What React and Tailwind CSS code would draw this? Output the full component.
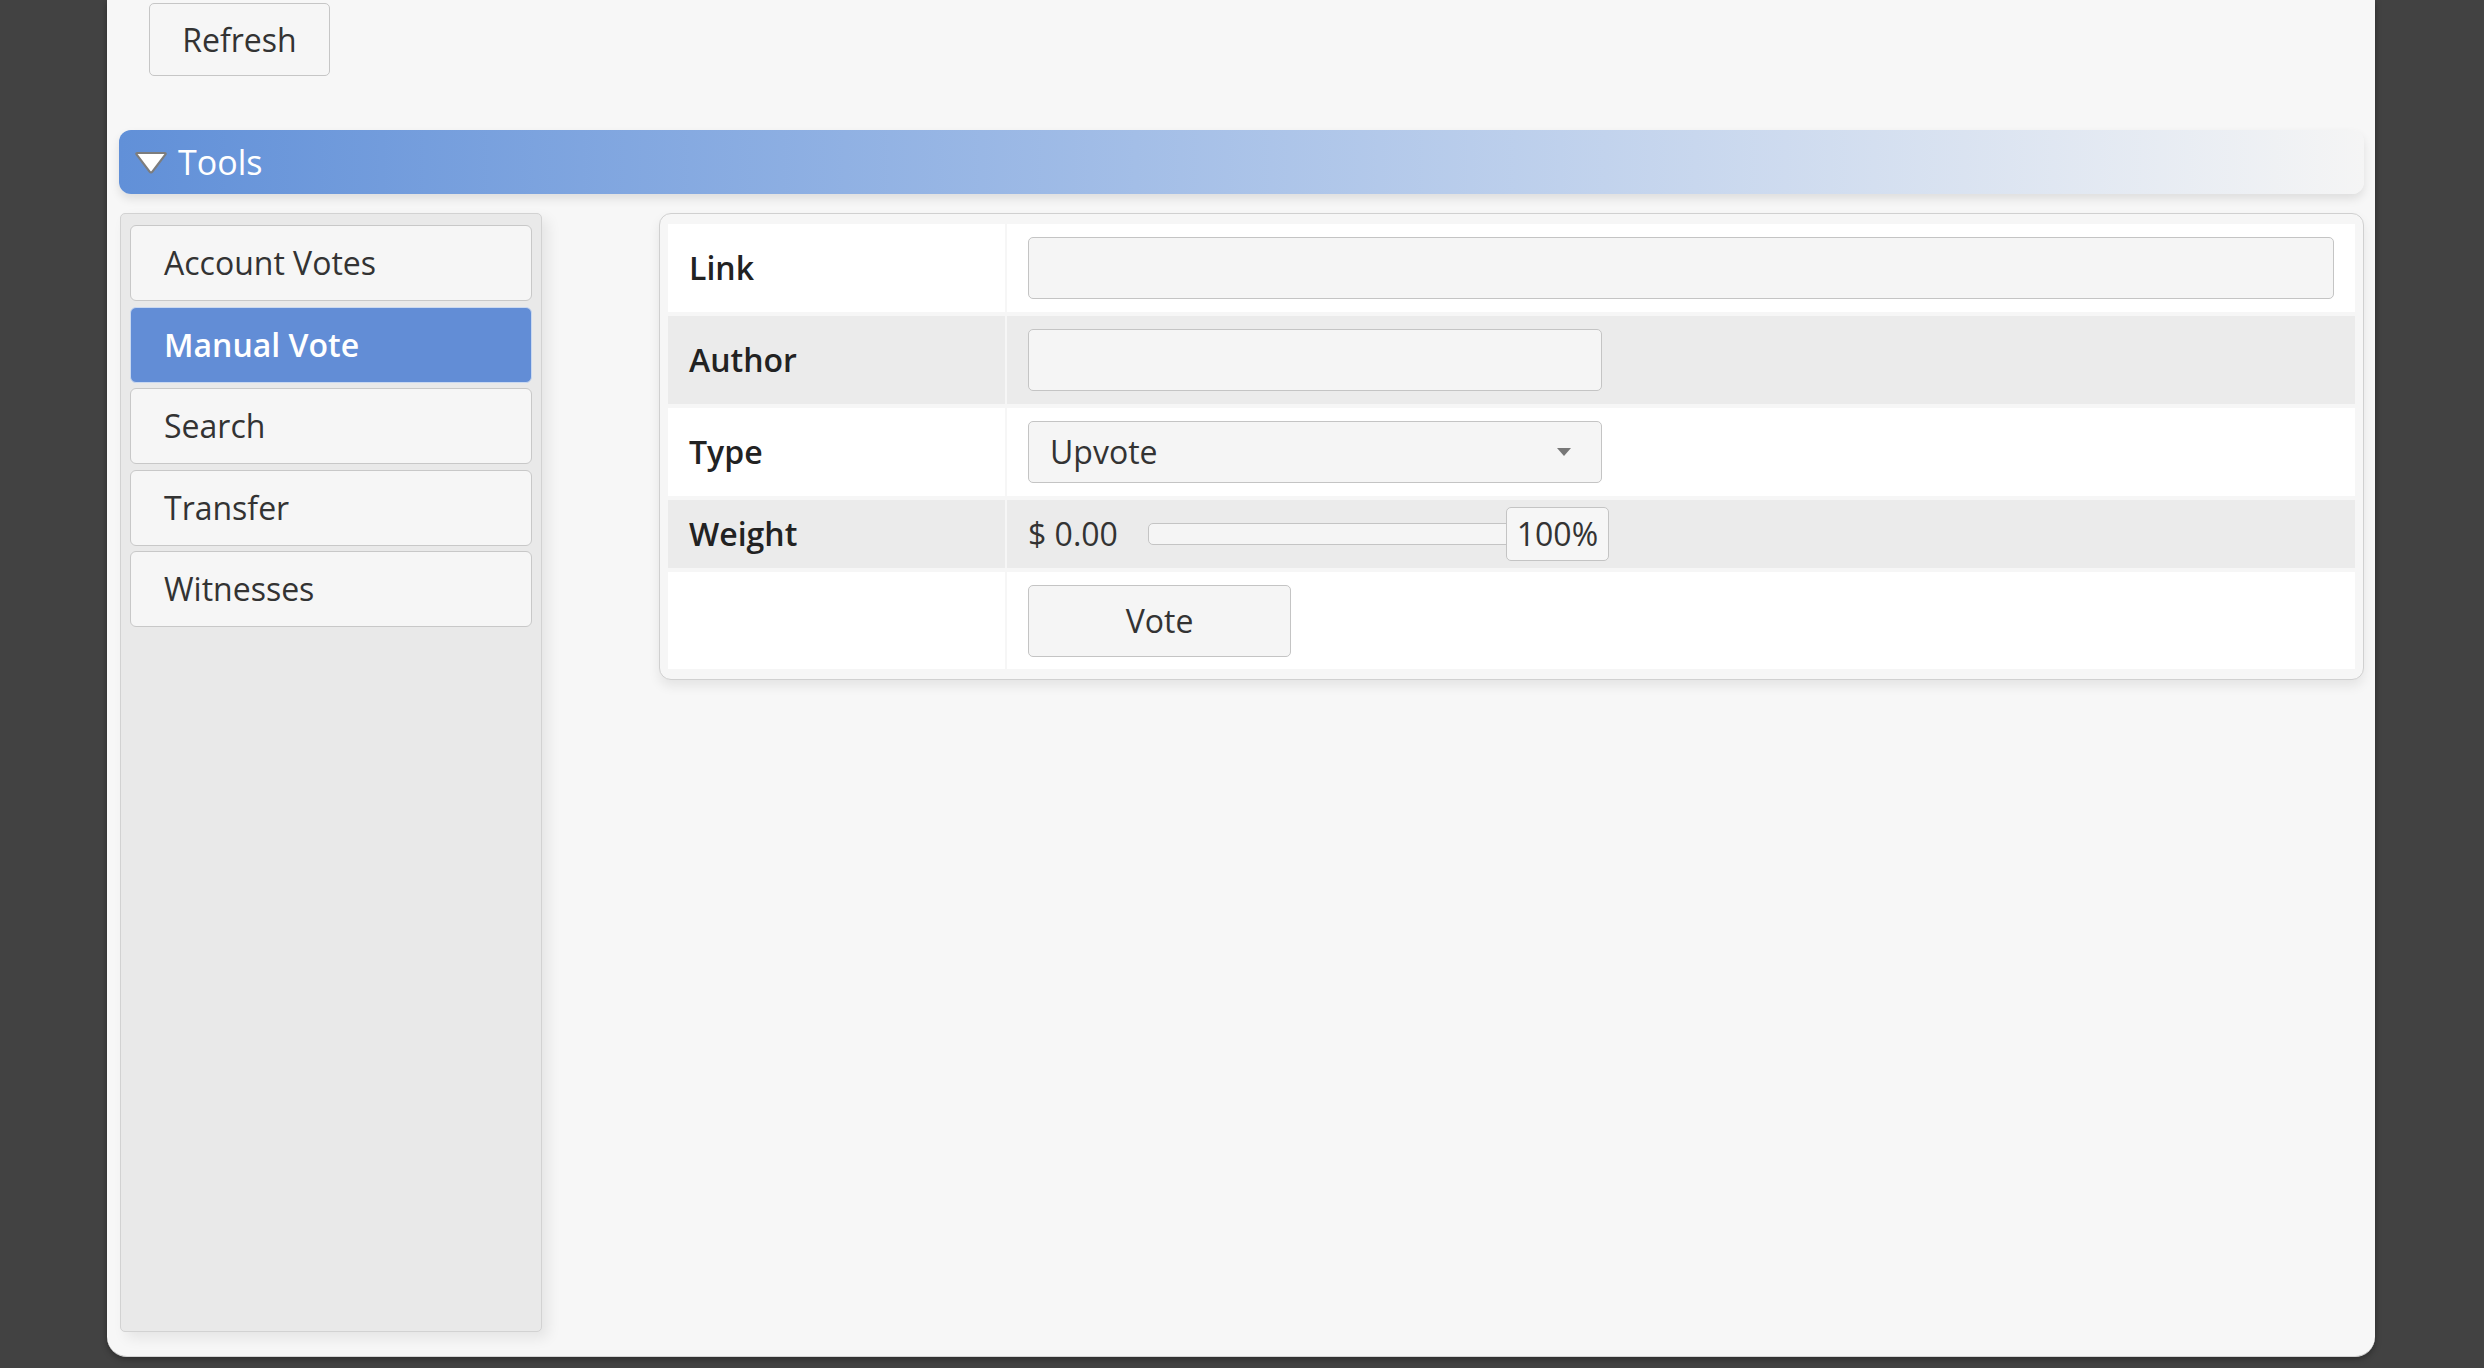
import React from 'react';

const tabs = ['Account Votes', 'Manual Vote', 'Search', 'Transfer', 'Witnesses'];

const TriangleIcon = () => (
  <svg width="34" height="25" viewBox="0 0 34 25" className="shrink-0">
    <path
      d="M3.5 3 L30.5 3 Q32.5 3 31.3 4.6 L18.4 21.6 Q17 23.4 15.6 21.6 L2.7 4.6 Q1.5 3 3.5 3 Z"
      fill="#ffffff"
      stroke="#7d7d7d"
      strokeWidth="2.2"
      strokeLinejoin="round"
    />
  </svg>
);

const Sidebar = ({ active }) => (
  <div className="ml-px h-[1119px] w-[422px] shrink-0 rounded-[5px] border border-[#d2d2d2] bg-[#e9e9e9] px-[9px] pt-[11px] shadow-[6px_6px_14px_rgba(0,0,0,0.08)]">
    <div className="flex flex-col gap-[5.5px]">
      {tabs.map((tab) => (
        <div
          key={tab}
          className={
            tab === active
              ? 'flex h-[76px] items-center rounded-[6px] border border-[#c9d8f0] bg-[#628dd6] pl-[33px] font-semibold text-white'
              : 'flex h-[76px] items-center rounded-[6px] border border-[#c8c8c8] bg-[#f6f6f6] pl-[33px] text-[#333333]'
          }
        >
          {tab}
        </div>
      ))}
    </div>
  </div>
);

const Label = ({ children, shade }) => (
  <div
    className={
      'flex items-center pl-[21px] font-semibold text-[#222222] ' +
      (shade ? 'bg-[#ebebeb]' : 'bg-white')
    }
  >
    {children}
  </div>
);

const Cell = ({ children, shade }) => (
  <div
    className={
      'flex items-center px-[21px] ' + (shade ? 'bg-[#ebebeb]' : 'bg-white')
    }
  >
    {children}
  </div>
);

const inputBox = 'h-[62px] rounded-[5px] border border-[#c4c4c4] bg-[#f5f5f5]';

const ManualVote = () => (
  <div className="ml-[117px] flex-1 self-start rounded-[12px] border border-[#d0d0d0] bg-[#f6f6f6] px-[8px] pt-[10px] pb-[10px] shadow-[0_6px_12px_rgba(0,0,0,0.08)]">
    <div className="grid grid-cols-[337px_1fr] grid-rows-[88px_88px_88px_68px_97px] gap-x-[2px] gap-y-[4px]">
      <Label>Link</Label>
      <Cell>
        <div className={inputBox + ' w-full'} />
      </Cell>

      <Label shade>Author</Label>
      <Cell shade>
        <div className={inputBox + ' w-[574px]'} />
      </Cell>

      <Label>Type</Label>
      <Cell>
        <div className={inputBox + ' flex w-[574px] items-center justify-between pl-[21px] pr-[30px] text-[#333333]'}>
          <span>Upvote</span>
          <svg width="14" height="8" viewBox="0 0 14 8">
            <path d="M0 0 L14 0 L7 8 Z" fill="#777777" />
          </svg>
        </div>
      </Cell>

      <Label shade>Weight</Label>
      <Cell shade>
        <span className="text-[#333333]">$ 0.00</span>
        <div className="ml-[30px] h-[22px] w-[360px] rounded-l-[5px] border border-[#c4c4c4] bg-[#f5f5f5]" />
        <div className="-ml-[2px] flex h-[54px] w-[103px] items-center justify-center rounded-[5px] border border-[#c4c4c4] bg-[#f6f6f6] text-[#333333]">
          100%
        </div>
      </Cell>

      <div className="bg-white" />
      <Cell>
        <button className="h-[72px] w-[263px] rounded-[5px] border border-[#c4c4c4] bg-[#f5f5f5] text-[#333333]">
          Vote
        </button>
      </Cell>
    </div>
  </div>
);

export default function App() {
  return (
    <div
      className="min-h-screen bg-[#424242] pr-[109px] pb-[11px] pl-[107px] text-[32px]"
      style={{ fontFamily: '"Open Sans", "Noto Sans", sans-serif' }}
    >
      <div className="h-[1357px] rounded-b-[20px] border-b border-[#d4d4d4] bg-[#f7f7f7] pt-[3px] pr-[11px] pl-[12px] shadow-[0_2px_6px_rgba(0,0,0,0.35)]">
        <button className="ml-[30px] h-[73px] w-[181px] rounded-[5px] border border-[#c6c6c6] bg-[#f6f6f6] text-[#333333]">
          Refresh
        </button>

        <div className="mt-[54px] flex h-[64px] items-center gap-[10px] rounded-[12px] bg-linear-to-r from-[#6190d8] to-[#f5f5f5] pl-[15px] text-[34px] text-white shadow-[0_5px_10px_rgba(0,0,0,0.1)]">
          <TriangleIcon />
          <span>Tools</span>
        </div>

        <div className="mt-[19px] flex">
          <Sidebar active="Manual Vote" />
          <ManualVote />
        </div>
      </div>
    </div>
  );
}
